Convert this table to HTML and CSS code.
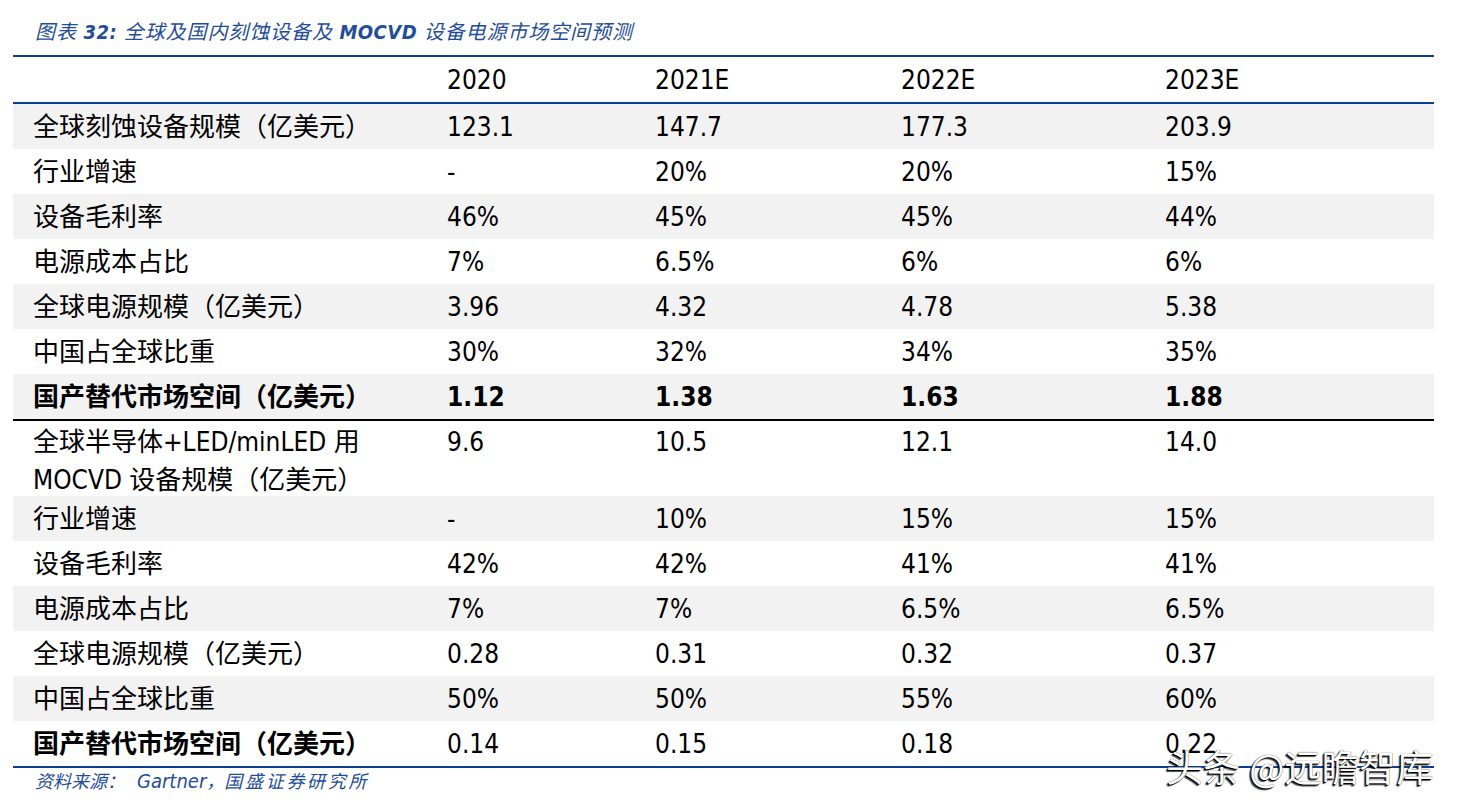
FILE: index.html
```html
<!DOCTYPE html>
<html lang="zh-CN">
<head>
<meta charset="utf-8">
<title>图表 32</title>
<link rel="stylesheet" href="styles.css">
</head>
<body>
<div class="page">
  <h1 class="title">图表 <span class="lat">32:</span> 全球及国内刻蚀设备及 <span class="lat">MOCVD</span> 设备电源市场空间预测</h1>
  <div class="table">
    <div class="row head"><div class="cell"></div><div class="cell">2020</div><div class="cell">2021E</div><div class="cell">2022E</div><div class="cell">2023E</div></div>
    <div class="row grey"><div class="cell">全球刻蚀设备规模（亿美元）</div><div class="cell">123.1</div><div class="cell">147.7</div><div class="cell">177.3</div><div class="cell">203.9</div></div>
    <div class="row"><div class="cell">行业增速</div><div class="cell">-</div><div class="cell">20%</div><div class="cell">20%</div><div class="cell">15%</div></div>
    <div class="row grey"><div class="cell">设备毛利率</div><div class="cell">46%</div><div class="cell">45%</div><div class="cell">45%</div><div class="cell">44%</div></div>
    <div class="row"><div class="cell">电源成本占比</div><div class="cell">7%</div><div class="cell">6.5%</div><div class="cell">6%</div><div class="cell">6%</div></div>
    <div class="row grey"><div class="cell">全球电源规模（亿美元）</div><div class="cell">3.96</div><div class="cell">4.32</div><div class="cell">4.78</div><div class="cell">5.38</div></div>
    <div class="row"><div class="cell">中国占全球比重</div><div class="cell">30%</div><div class="cell">32%</div><div class="cell">34%</div><div class="cell">35%</div></div>
    <div class="row grey bold divider"><div class="cell">国产替代市场空间（亿美元）</div><div class="cell">1.12</div><div class="cell">1.38</div><div class="cell">1.63</div><div class="cell">1.88</div></div>
    <div class="row tall"><div class="cell">全球半导体+LED/minLED 用<br>MOCVD 设备规模（亿美元）</div><div class="cell">9.6</div><div class="cell">10.5</div><div class="cell">12.1</div><div class="cell">14.0</div></div>
    <div class="row grey"><div class="cell">行业增速</div><div class="cell">-</div><div class="cell">10%</div><div class="cell">15%</div><div class="cell">15%</div></div>
    <div class="row"><div class="cell">设备毛利率</div><div class="cell">42%</div><div class="cell">42%</div><div class="cell">41%</div><div class="cell">41%</div></div>
    <div class="row grey"><div class="cell">电源成本占比</div><div class="cell">7%</div><div class="cell">7%</div><div class="cell">6.5%</div><div class="cell">6.5%</div></div>
    <div class="row"><div class="cell">全球电源规模（亿美元）</div><div class="cell">0.28</div><div class="cell">0.31</div><div class="cell">0.32</div><div class="cell">0.37</div></div>
    <div class="row grey"><div class="cell">中国占全球比重</div><div class="cell">50%</div><div class="cell">50%</div><div class="cell">55%</div><div class="cell">60%</div></div>
    <div class="row last"><div class="cell strong">国产替代市场空间（亿美元）</div><div class="cell">0.14</div><div class="cell">0.15</div><div class="cell">0.18</div><div class="cell">0.22</div></div>
  </div>
  <p class="source">资料来源：<span class="lat">Gartner</span>，<span class="wide">国盛证券研究所</span></p>
  <div class="watermark">头条 @远瞻智库</div>
</div>
</body>
</html>
```

FILE: styles.css
```css
html, body {
  margin: 0;
  padding: 0;
  background: #ffffff;
}

.page {
  position: relative;
  width: 1457px;
  height: 811px;
  padding-left: 13px;
  box-sizing: border-box;
  font-family: "DejaVu Sans Condensed", "DejaVu Sans", "Noto Sans CJK SC", sans-serif;
  font-stretch: condensed;
  color: #000000;
}

.title {
  margin: 0;
  padding: 20px 0 0 22px;
  height: 35px;
  font-size: 20px;
  line-height: 24px;
  font-weight: normal;
  font-style: italic;
  letter-spacing: 0.9px;
  color: #1f4d9e;
}

.title .lat {
  font-weight: bold;
  letter-spacing: 0.5px;
}

.table {
  width: 1421px;
  border-top: 2px solid #0b3f94;
}

.row {
  display: grid;
  grid-template-columns: 414px 208px 246px 264px 289px;
  height: 45px;
  align-items: center;
  font-size: 26px;
  line-height: 30px;
}

.row.grey {
  background: #f2f2f2;
}

.row.head {
  border-bottom: 2px solid #0b3f94;
}

.row.divider {
  border-bottom: 2px solid #000000;
}

.row.last {
  border-bottom: 2px solid #0b3f94;
}

.row.bold .cell,
.cell.strong {
  font-weight: bold;
}

.row.tall {
  height: 75px;
  align-items: start;
  line-height: 38px;
}

.row.tall .cell {
  padding-top: 2px;
}

.cell {
  padding-left: 20px;
  white-space: nowrap;
}

.source {
  margin: 0;
  padding: 2px 0 0 22px;
  font-size: 18px;
  line-height: 22px;
  font-style: italic;
  color: #1f4d9e;
}

.source .lat {
  margin-left: 12px;
  font-size: 20px;
}

.source .wide {
  letter-spacing: 2.7px;
}

.watermark {
  position: absolute;
  left: 1166px;
  top: 744px;
  font-family: "Noto Sans CJK SC", sans-serif;
  font-size: 37px;
  line-height: 44px;
  color: #ffffff;
  letter-spacing: 0.3px;
  text-shadow: -1px 1px 0 #000, -2px 2px 1px rgba(0, 0, 0, 0.7), 0 0 1px #000;
}
```
